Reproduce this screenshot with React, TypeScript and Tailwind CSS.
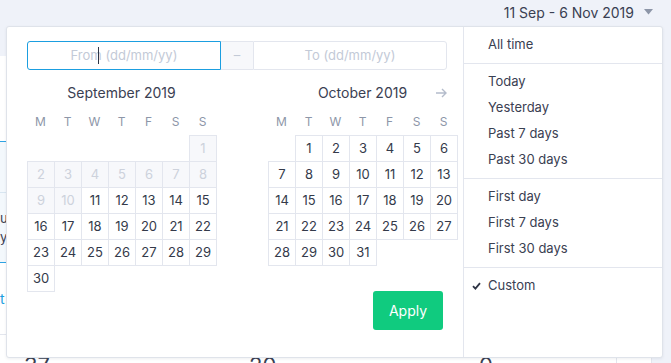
import React from 'react';

const font = { fontFamily: 'Inter, "Noto Sans", sans-serif' };

type Day = { n: number | null; off?: boolean };

function buildMonth(startOffset: number, days: number, offUntil = 0): Day[] {
  const cells: Day[] = [];
  for (let i = 0; i < startOffset; i++) cells.push({ n: null });
  for (let d = 1; d <= days; d++) cells.push({ n: d, off: d <= offUntil });
  return cells;
}

const weekdays = ['M', 'T', 'W', 'T', 'F', 'S', 'S'];

function Month({ title, cells, arrow }: { title: string; cells: Day[]; arrow?: boolean }) {
  return (
    <div className="w-[189px]">
      {/* title */}
      <div className="mt-[12px] grid h-[18px] grid-cols-[1fr_auto_1fr] items-center">
        <div />
        <div className="text-[14px] text-[#3a4052]">{title}</div>
        <div className="flex justify-end pr-[10px]">
          {arrow && (
            <svg width="12" height="10" viewBox="0 0 12 10" fill="none" stroke="#b4bccb" strokeWidth="1.4">
              <path d="M1 5h10M7 1l4 4-4 4" />
            </svg>
          )}
        </div>
      </div>

      {/* weekdays */}
      <div className="mt-[9px] grid h-[26px] grid-cols-[repeat(7,27px)] items-center text-[12px] text-[#8d96a8]">
        {weekdays.map((w, i) => (
          <div key={i} className="text-center">{w}</div>
        ))}
      </div>

      {/* days */}
      <div className="grid grid-cols-[repeat(7,27px)] auto-rows-[26px]">
        {cells.map((c, i) =>
          c.n === null ? (
            <div key={i} />
          ) : (
            <div
              key={i}
              className={
                'flex h-[27px] w-[28px] items-center justify-center border border-[#e3e6ee] text-[13px] ' +
                (c.off ? 'bg-[#f7f8fb] text-[#cdd2dc]' : 'bg-white text-[#343a4a]')
              }
            >
              {c.n}
            </div>
          )
        )}
      </div>
    </div>
  );
}

function MenuItem({ label, checked }: { label: string; checked?: boolean }) {
  return (
    <div className="flex h-[26px] items-center pl-[8px] text-[13px] text-[#3a4052]">
      <div className="flex w-[16px] items-center">
        {checked && (
          <svg width="9" height="8" viewBox="0 0 9 8" fill="none" stroke="#2f3545" strokeWidth="1.8">
            <path d="M1 4.2l2.4 2.4L8 1.2" />
          </svg>
        )}
      </div>
      <span>{label}</span>
    </div>
  );
}

export default function App() {
  const sep = buildMonth(6, 30, 10);
  const oct = buildMonth(1, 31);

  return (
    <div className="relative h-[363px] w-[671px] overflow-hidden bg-[#eff2f9]" style={font}>
      {/* header */}
      <div className="flex h-[56px] items-start justify-end pr-[18px] pt-[2px]">
        <div className="flex h-[20px] items-center gap-[10px] text-[14px] text-[#3a4052]">
          <span>11 Sep - 6 Nov 2019</span>
          <svg width="9" height="6" viewBox="0 0 9 6">
            <path d="M0 0h9L4.5 5.5z" fill="#8d96a8" />
          </svg>
        </div>
      </div>

      {/* page card behind the popup */}
      <div className="flex h-[307px] w-[652px] flex-col border-r border-[#e3e6ee] bg-white">
        <div className="h-[85px] shrink-0" />
        <div className="h-[122px] shrink-0 border-y border-[#2ea3e3] bg-[#f3f8fc]">
          <div className="h-[51px] border-b border-[#d8e6f1]" />
          <div className="pt-[16px] text-[13px] leading-[19px] text-[#3a4052]">
            <div>u</div>
            <div>y</div>
          </div>
        </div>
        <div className="flex h-[72px] shrink-0 items-center border-b border-[#e3e6ee] text-[14px] text-[#1b9ee0]">
          <span>t</span>
        </div>
        <div className="flex h-[40px] shrink-0 items-start pt-[19px] text-[22px] leading-none text-[#3a4052]">
          <span className="ml-[24px] w-[225px]">37</span>
          <span className="w-[230px]">20</span>
          <span className="w-[137px]">0</span>
          <span className="-mt-[19px] h-[40px] border-l border-[#e3e6ee]" />
        </div>
      </div>

      {/* date range popup */}
      <div className="absolute left-[6px] top-[26px] flex h-[332px] w-[657px] rounded-[3px] border border-[#dfe3ea] bg-white shadow-[0_1px_3px_rgba(40,50,80,0.08)]">
        {/* calendars */}
        <div className="w-[456px] pl-[20px] pt-[14px]">
          <div className="flex h-[29px] w-[420px] text-[13px] text-[#c3cad7]">
            <div className="relative flex w-[194px] items-center justify-center rounded-l-[3px] border border-[#1b9ee0]">
              <span>From (dd/mm/yy)</span>
              <span className="absolute left-[70px] top-[5px] h-[17px] w-px bg-[#2f3545]" />
            </div>
            <div className="flex w-[32px] items-center justify-center border-y border-[#e3e6ee] bg-[#f7f8fb]">–</div>
            <div className="flex flex-1 items-center justify-center rounded-r-[3px] border border-[#e3e6ee]">
              To (dd/mm/yy)
            </div>
          </div>

          <div className="flex gap-[52px]">
            <Month title="September 2019" cells={sep} />
            <Month title="October 2019" cells={oct} arrow />
          </div>

          <div className="flex justify-end pr-[20px]">
            <button className="h-[39px] w-[70px] rounded-[3px] bg-[#10cb7f] text-[14px] text-white">Apply</button>
          </div>
        </div>

        {/* presets */}
        <div className="flex w-[199px] flex-col border-l border-[#e3e6ee]">
          <div className="border-b border-[#e3e6ee] pb-[5px] pt-[5px]">
            <MenuItem label="All time" />
          </div>
          <div className="border-b border-[#e3e6ee] pb-[5px] pt-[5px]">
            <MenuItem label="Today" />
            <MenuItem label="Yesterday" />
            <MenuItem label="Past 7 days" />
            <MenuItem label="Past 30 days" />
          </div>
          <div className="border-b border-[#e3e6ee] pb-[5px] pt-[5px]">
            <MenuItem label="First day" />
            <MenuItem label="First 7 days" />
            <MenuItem label="First 30 days" />
          </div>
          <div className="pt-[5px]">
            <MenuItem label="Custom" checked />
          </div>
        </div>
      </div>
    </div>
  );
}
